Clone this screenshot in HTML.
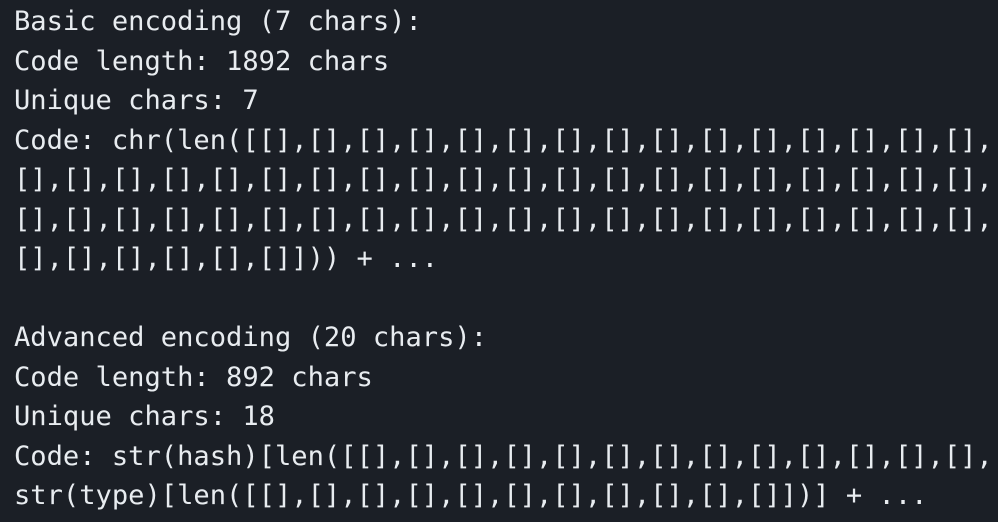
<!DOCTYPE html>
<html><head><meta charset="utf-8"><style>
html,body{margin:0;padding:0;background:#1b1f26;width:998px;height:522px;overflow:hidden}
pre{margin:0;padding:2px 0 0 14px;font-family:"DejaVu Sans Mono","Liberation Mono",monospace;font-size:27.1px;line-height:39.5px;color:#e8ecf0;white-space:pre;overflow:hidden}
</style></head><body><pre>Basic encoding (7 chars):
Code length: 1892 chars
Unique chars: 7
Code: chr(len([[],[],[],[],[],[],[],[],[],[],[],[],[],[],[],[],[],
[],[],[],[],[],[],[],[],[],[],[],[],[],[],[],[],[],[],[],[],[],
[],[],[],[],[],[],[],[],[],[],[],[],[],[],[],[],[],[],[],[],[],
[],[],[],[],[],[]])) + ...

Advanced encoding (20 chars):
Code length: 892 chars
Unique chars: 18
Code: str(hash)[len([[],[],[],[],[],[],[],[],[],[],[],[],[],[],[],
str(type)[len([[],[],[],[],[],[],[],[],[],[],[]])] + ...</pre></body></html>
